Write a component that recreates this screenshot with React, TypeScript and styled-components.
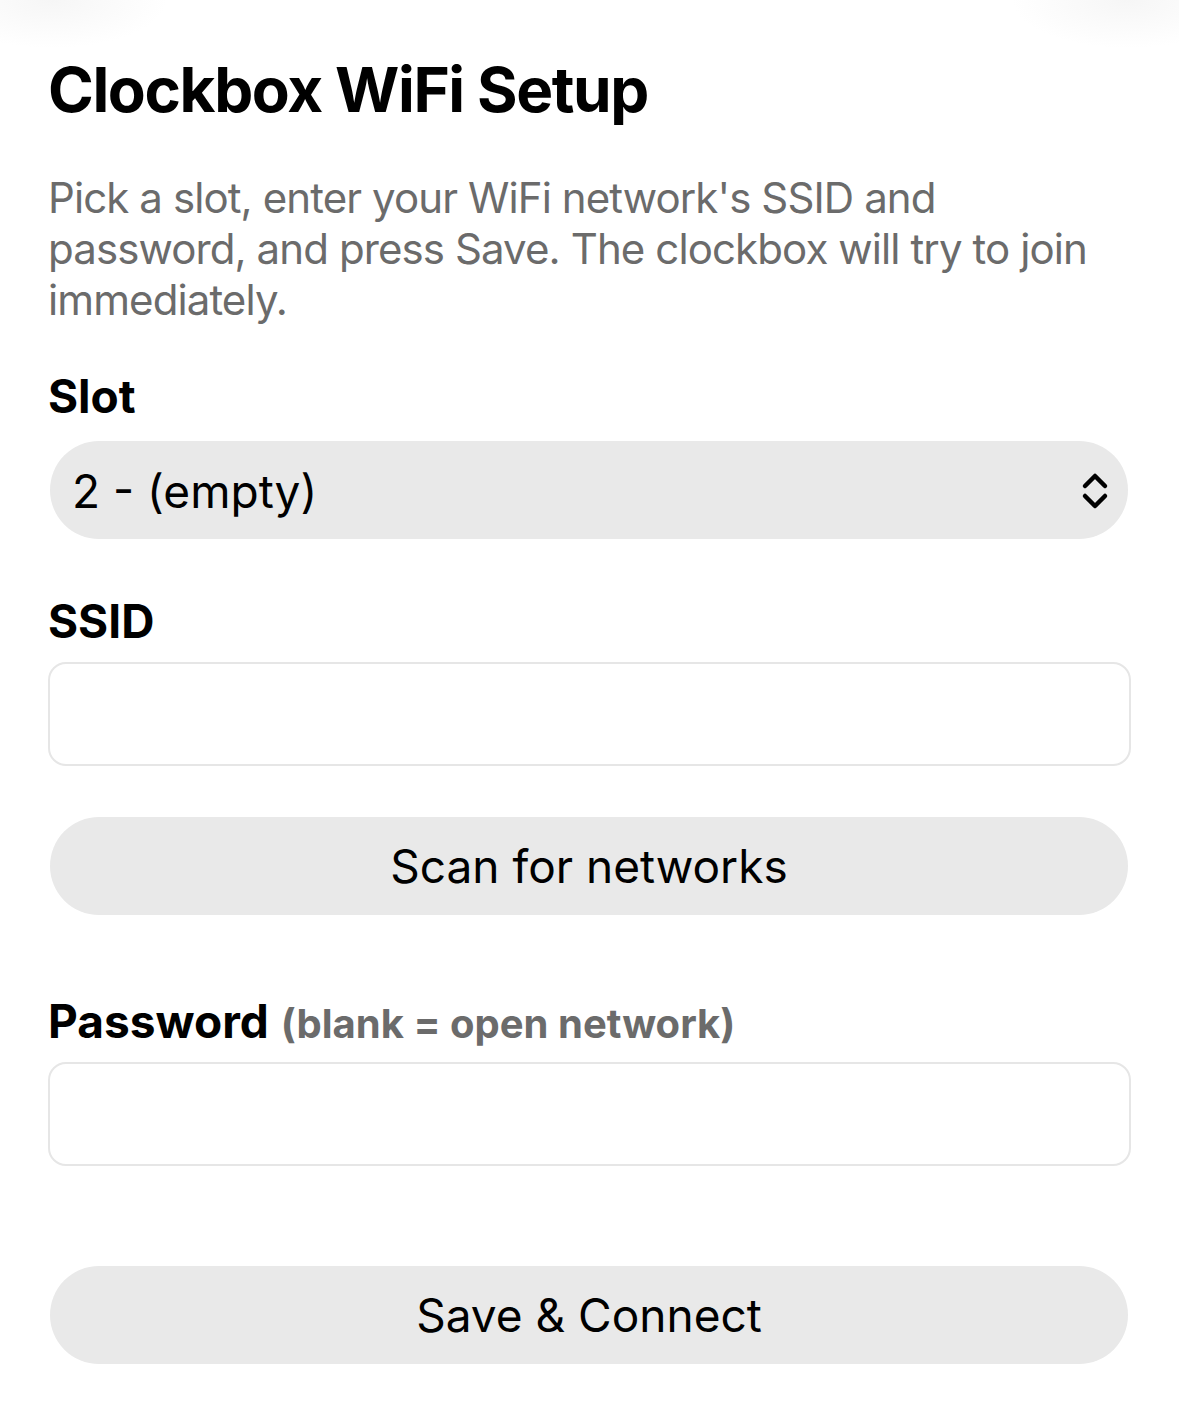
import React from 'react';
import styled, { createGlobalStyle } from 'styled-components';

const GlobalStyle = createGlobalStyle`
    html, body {
        margin: 0;
        padding: 0;
        background: #ffffff;
    }
    body {
        font-family: Inter, 'Noto Sans', 'Liberation Sans', sans-serif;
        color: #000000;
        min-height: 1410px;
        background:
            radial-gradient(ellipse 115px 48px at 52px 0, #f6f6f6, rgba(255, 255, 255, 0)),
            radial-gradient(ellipse 115px 48px at 1127px 0, #f6f6f6, rgba(255, 255, 255, 0)),
            #ffffff;
    }
`;

const Page = styled.main`
    display: flex;
    flex-direction: column;
    padding: 50px 48px 40px;
`;

const Title = styled.h1`
    margin: 0;
    font-size: 62px;
    line-height: 80px;
    font-weight: 700;
    letter-spacing: -1.4px;
`;

const Intro = styled.p`
    margin: 42px 0 0;
    font-size: 42px;
    line-height: 51px;
    letter-spacing: -0.9px;
    color: #6b6b6b;
`;

const Label = styled.label<{ $gap: number }>`
    display: block;
    margin: ${({ $gap }) => $gap}px 0 0;
    font-size: 46px;
    line-height: 58px;
    font-weight: 700;
`;

const Hint = styled.span`
    margin-left: 12px;
    font-size: 40px;
    color: #6b6b6b;
`;

const SelectBox = styled.div`
    display: flex;
    align-items: center;
    justify-content: space-between;
    margin: 16px 3px 0 2px;
    height: 98px;
    padding: 2px 18px 0 22px;
    box-sizing: border-box;
    border-radius: 49px;
    background: #e9e9e9;
    font-size: 46px;
`;

const Field = styled.input<{ $gap: number }>`
    display: block;
    box-sizing: border-box;
    width: 100%;
    height: 104px;
    margin-top: ${({ $gap }) => $gap}px;
    border: 2px solid #e6e6e6;
    border-radius: 18px;
    background: #ffffff;
    outline: none;
    font: inherit;
    font-size: 46px;
    padding: 0 20px;
`;

const PillButton = styled.button<{ $gap: number }>`
    display: block;
    height: 98px;
    margin: ${({ $gap }) => $gap}px 3px 0 2px;
    border: none;
    border-radius: 49px;
    background: #e9e9e9;
    color: #000000;
    font-family: inherit;
    font-size: 46px;
    cursor: pointer;
`;

const Chevrons = () => (
    <svg width="30" height="40" viewBox="0 0 30 40" fill="none" stroke="#000" strokeWidth="4.5" strokeLinecap="round" strokeLinejoin="round">
        <path d="M5 15 L15 5 L25 15" />
        <path d="M5 25 L15 35 L25 25" />
    </svg>
);

export default function App() {
    return (
        <>
            <GlobalStyle />
            <Page>
                <Title>Clockbox WiFi Setup</Title>
                <Intro>
                    Pick a slot, enter your WiFi network's SSID and password, and press Save. The clockbox will try
                    to join immediately.
                </Intro>

                <Label $gap={42}>Slot</Label>
                <SelectBox>
                    <span>2 - (empty)</span>
                    <Chevrons />
                </SelectBox>

                <Label $gap={53}>SSID</Label>
                <Field $gap={12} type="text" />

                <PillButton $gap={51} type="button">
                    Scan for networks
                </PillButton>

                <Label $gap={77}>
                    Password<Hint>(blank = open network)</Hint>
                </Label>
                <Field $gap={9} type="password" />

                <PillButton $gap={100} type="button">
                    Save &amp; Connect
                </PillButton>
            </Page>
        </>
    );
}
